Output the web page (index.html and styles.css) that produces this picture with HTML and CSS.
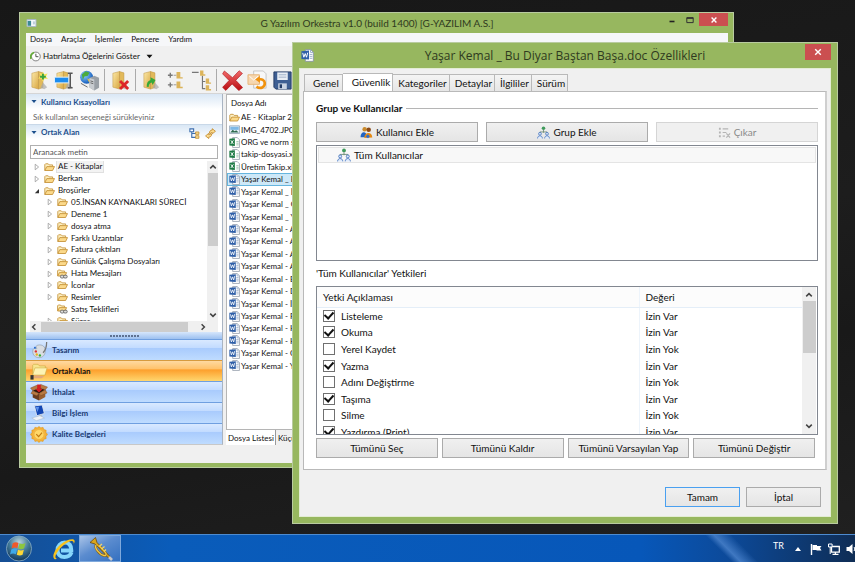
FILE: index.html
```html
<!DOCTYPE html>
<html lang="tr">
<head>
<meta charset="utf-8">
<title>G Yazılım Orkestra</title>
<link rel="stylesheet" href="styles.css">
</head>
<body>
<svg class="defs" aria-hidden="true">
  <defs>
    <linearGradient id="gFolder" x1="0" y1="0" x2="1" y2="1"><stop offset="0" stop-color="#fbe9a9"/><stop offset="1" stop-color="#d9a640"/></linearGradient>
    <linearGradient id="gRed" x1="0" y1="0" x2="0" y2="1"><stop offset="0" stop-color="#f26a6a"/><stop offset="1" stop-color="#b80d12"/></linearGradient>
    <radialGradient id="gOrb" cx=".5" cy=".25" r=".8"><stop offset="0" stop-color="#b9d3df"/><stop offset=".5" stop-color="#3f7897"/><stop offset="1" stop-color="#0b2c50"/></radialGradient>
    <radialGradient id="gGlobe" cx=".35" cy=".35" r=".7"><stop offset="0" stop-color="#8fd0ff"/><stop offset="1" stop-color="#0d55b8"/></radialGradient>
    <radialGradient id="gSeal"><stop offset="0" stop-color="#ffe58a"/><stop offset="1" stop-color="#f0a020"/></radialGradient>
  </defs>
  <symbol id="folder" viewBox="0 0 11 10">
    <path d="M.8 8.400V2.600L1.600 1.800h2.600l1 1.100h3.400v1.400" fill="#fdf0c4" stroke="#c08a2c" stroke-width=".8"/>
    <path d="M.8 8.500 2.800 4.600h7.700L8.600 8.500z" fill="#fbd98a" stroke="#c08a2c" stroke-width=".8" stroke-linejoin="round"/>
  </symbol>
  <symbol id="folder-link" viewBox="0 0 11 10">
    <path d="M.6 6.800V1.800L1.300 1h2.200l.9 1h3.200v1.400" fill="#fdf0c4" stroke="#c08a2c" stroke-width=".8"/>
    <path d="M.6 7 2.400 3.600h7.200L8 7z" fill="#fbd98a" stroke="#c08a2c" stroke-width=".8"/>
    <rect x="3.400" y="6.200" width="3.600" height="2.800" rx="1.300" fill="#ddd" stroke="#666" stroke-width=".9"/>
    <rect x="6.600" y="6.200" width="3.600" height="2.800" rx="1.300" fill="#ddd" stroke="#666" stroke-width=".9"/>
  </symbol>
  <symbol id="word" viewBox="0 0 12 12">
    <path d="M4 .6h5l2.400 2.400v8.400H4z" fill="#fff" stroke="#8a95a5" stroke-width=".8"/>
    <path d="M8.800.8V3.200h2.400M8 5h2.500M8 6.800h2.500M8 8.600h2.500" fill="none" stroke="#8fa6c6" stroke-width=".8"/>
    <path d="M.4 2 7.400 1.400v8.400L.4 9.200z" fill="#2f5fa8"/>
    <path d="M1.600 3.600 2.600 7.600 3.900 4.200 5.100 7.600 6.200 3.400" fill="none" stroke="#fff" stroke-width=".9"/>
  </symbol>
  <symbol id="excel" viewBox="0 0 12 12">
    <path d="M4 .6h5l2.400 2.400v8.400H4z" fill="#fff" stroke="#8a95a5" stroke-width=".8"/>
    <path d="M8 5h2.500M8 6.800h2.500M8 8.600h2.500" stroke="#83b79a" stroke-width=".8"/>
    <path d="M.4 2 6.400 1.400v8.400L.4 9.200z" fill="#1d7a45"/>
    <path d="M2 3.600 4.800 7.600M4.800 3.600 2 7.600" stroke="#fff" stroke-width="1"/>
  </symbol>
  <symbol id="image" viewBox="0 0 12 12">
    <path d="M.6 2h10.800v8.400H.6z" fill="#e9f2fa" stroke="#8a9cae" stroke-width=".8"/>
    <path d="M1.400 3h9.200v3.400H1.400z" fill="#7db8e6"/><path d="M1.400 9.400 4 6.200l2.200 1.600 1.600-1 2.800 2.600z" fill="#2d6a4e"/>
  </symbol>
  <symbol id="closed" viewBox="0 0 6 8"><path d="M1.200 1.200 4.600 4 1.200 6.800z" fill="#fff" stroke="#9a9a9a" stroke-width=".8"/></symbol>
  <symbol id="open" viewBox="0 0 6 8"><path d="M5 2v4.200H.8z" fill="#333"/></symbol>
  <symbol id="caret" viewBox="0 0 8 5"><path d="M.6.6h6.800L4 4.400z" fill="currentColor"/></symbol>
  <symbol id="chev" viewBox="0 0 8 8"><path d="M1.200 5.400 4 2.600l2.800 2.800" fill="none" stroke="#444" stroke-width="1.500"/></symbol>
  <symbol id="group" viewBox="0 0 14 14">
    <circle cx="7" cy="2.400" r="1.900" fill="#3f9a5b"/><path d="M7 4.200v3M3.200 8V6.400h7.600V8" fill="none" stroke="#6b8a75" stroke-width=".9"/>
    <g fill="#dfeafb" stroke="#4a78c0" stroke-width=".9"><circle cx="3.200" cy="8.400" r="1.500"/><path d="M.6 13.400c0-3.800 5.200-3.800 5.200 0"/><circle cx="10.800" cy="8.400" r="1.500"/><path d="M8.200 13.400c0-3.800 5.200-3.800 5.200 0"/></g>
  </symbol>
  <symbol id="book" viewBox="0 0 22 22">
    <path d="M3 3.400 10 1.600V20l-7-2z" fill="url(#gFolder)" stroke="#b98f3c" stroke-width=".5"/>
    <path d="M10 1.600 14.600 3v15.400L10 20z" fill="#e2b95a" stroke="#b98f3c" stroke-width=".5"/>
    <path d="M14.600 13l4.400 5.200-3 2-4-1.600z" fill="#a9a9a9" opacity=".7"/>
  </symbol>
</svg>

<main class="desktop">
  <section class="window app" aria-label="G Yazılım Orkestra">
    <header class="titlebar">
      <svg class="app-icon" viewBox="0 0 10 8"><path d="M.5.5h9v7h-9z" fill="#f4f8fb" stroke="#a9b8c4"/><path d="M1.200 1.800h3.400v5H1.200z" fill="#3b8a94"/><path d="M6.400 2.400h2v3h-2z" fill="#bcd"/></svg>
      <h1 class="title">G Yazılım Orkestra v1.0 (build 1400) [G-YAZILIM A.S.]</h1>
      <div class="caption">
        <button class="cap" aria-label="Küçült"><svg viewBox="0 0 8 8"><path d="M1.500 5.500h5" stroke="#222" stroke-width="1.600"/></svg></button>
        <button class="cap" aria-label="Büyüt"><svg viewBox="0 0 8 8"><path d="M.8 1.600h6.400v5H.8zM.8 2.400h6.400" fill="none" stroke="#333"/></svg></button>
        <button class="cap close" aria-label="Kapat"><svg viewBox="0 0 8 8"><path d="M1.600 1.600 6.400 6.400M6.400 1.600 1.600 6.400" stroke="#fff" stroke-width="1.400"/></svg></button>
      </div>
    </header>
    <div class="app-body">
      <nav class="menu"><a href="#">Dosya</a><a href="#">Araçlar</a><a href="#">İşlemler</a><a href="#">Pencere</a><a href="#">Yardım</a></nav>
      <div class="reminder">
        <button class="flat"><svg class="i11" viewBox="0 0 12 12"><circle cx="6.400" cy="6" r="4.800" fill="#fff" stroke="#777"/><path d="M6.400 3v3.200h2.800" fill="none" stroke="#444"/><path d="M1.200 8.500A5 5 0 0 1 4.400 1.600" fill="none" stroke="#64ad36" stroke-width="1.800"/></svg>Hatırlatma Öğelerini Göster<svg class="drop"><use href="#caret"/></svg></button>
      </div>
      <div class="tools">
        <button class="tool" aria-label="Yeni"><svg viewBox="0 0 22 22"><use href="#book"/><path d="M14.500 1.500l1.500 3 3.500-.8-1.700 3.100 2 2.700-3.600-.3-1.700 3-1.500-3.200-3.500-.2 2.500-2.500-1-3.300 3 1.200z" fill="#f8e45c"/><path d="M14.600 4v6M11.600 7h6" stroke="#3aa33f" stroke-width="2"/></svg></button>
        <button class="tool" aria-label="Yeniden adlandır"><svg viewBox="0 0 22 22"><use href="#book"/><path d="M.5 7.500h15v6H.5z" fill="#1c8cf0" stroke="#e6f2fb"/><path d="M14.500 3.500h5M17 3.500v15M14.500 18.500h5" stroke="#555" stroke-width="1.600"/></svg></button>
        <button class="tool" aria-label="Sunucu"><svg viewBox="0 0 22 22"><circle cx="8" cy="7.600" r="6.800" fill="url(#gGlobe)"/><path d="M3 4.600l4-3.400 4 1.600-2 3.400-3.400.6L4 10.400z" fill="#4cab3c"/><path d="M8.500 9l3.500 1-1 4z" fill="#e6c33c"/><path d="M11 8.400 16 6l5 2v10.600l-5 2.800-5-3z" fill="#9aa0a6"/><path d="M11 8.400l5 1.600v11.400l-5-3z" fill="#c8ccd0"/><path d="M12 11.400l3 1M12 13.400l3 1M2 14l7 4" stroke="#666"/></svg></button>
        <span class="sep"></span>
        <button class="tool" aria-label="Klasör sil"><svg viewBox="0 0 22 22"><use href="#book"/><path d="M10.500 11.500l8.500 8.500M19 11.500 10.500 20" stroke="#dd2528" stroke-width="3"/></svg></button>
        <span class="sep"></span>
        <button class="tool" aria-label="Klasör yükle"><svg viewBox="0 0 22 22"><use href="#book"/><path d="M6 17.500c0-4 1-6 4-7V7.600l5.200 3-3 5-1-2.600c-2 .5-3 2-3.200 4.800z" fill="#35a93a"/></svg></button>
        <button class="tool" aria-label="Genişlet"><svg viewBox="0 0 22 22"><g id="pair"><path d="M2 5.500h5M4.500 3v5" stroke="#777" stroke-width="1.400"/><path d="M8 5.500h3" stroke="#999"/><path d="M11 2h4v5.500h2.500V9H11z" fill="#dcb45a"/></g><use href="#pair" y="10"/></svg></button>
        <button class="tool" aria-label="Ağaç"><svg viewBox="0 0 22 22"><path d="M1 2.500h7M12 6v13.500h3M12 12h3" fill="none" stroke="#777" stroke-width="1.200"/><g id="f1"><path d="M9.500.5h3.500v4H15v1.500H9.500z" fill="#dcb45a"/></g><use href="#f1" x="6" y="8.500"/><use href="#f1" x="6" y="15.500"/></svg></button>
        <span class="sep"></span>
        <button class="tool" aria-label="Sil"><svg viewBox="0 0 22 22"><path d="M2.500 1 11 8 18 .8l3.400 2.800-7 7.200 7.200 7.600-4 3.200L10.600 14.600 4 21.400.6 18.200 7.400 11 .6 4z" fill="url(#gRed)" stroke="#a80d12" stroke-width=".6"/></svg></button>
        <button class="tool" aria-label="Yenile"><svg viewBox="0 0 22 22"><path d="M7 1h10l3 3v15H7z" fill="#f7f7f7" stroke="#c4c4c4"/><path d="M1 5h12v10H1z" fill="#f6d7b0" stroke="#e7b478"/><path d="M2.500 6.500 7 10.500l4.600-4" fill="none" stroke="#fff"/><path d="M10 17.200c4 3.400 9 .8 8.600-3.600-.3-3-3.200-4.600-6-3.600" fill="none" stroke="#f0920f" stroke-width="2.800"/><path d="M13.500 6.400v7L8.600 10z" fill="#f0920f"/></svg></button>
        <button class="tool" aria-label="Kaydet"><svg viewBox="0 0 22 22"><path d="M2 2h18v18H4l-2-2z" fill="#3e5f93" stroke="#223b66"/><path d="M5.500 2.500h11v8h-11z" fill="#e9eef5"/><path d="M6.500 14h9v6h-9z" fill="#c9d3e2"/><path d="M8 15h2.500v4H8z" fill="#223b66"/><path d="M7 5h8M7 7.500h8" stroke="#9fb0c8"/></svg></button>
      </div>
      <div class="work">
        <aside class="side">
          <h2 class="sec"><svg><use href="#caret"/></svg>Kullanıcı Kısayolları</h2>
          <p class="hint">Sık kullanılan seçeneği sürükleyiniz</p>
          <h2 class="sec sec-line"><svg><use href="#caret"/></svg><span>Ortak Alan</span>
            <button class="mini" aria-label="Ağaç görünümü"><svg viewBox="0 0 10 10"><path d="M2.500 3v5.500h4M2.500 5h4" fill="none" stroke="#3f6fae"/><path d="M.8.8h3.400v2.600H.8z" fill="#fff" stroke="#3f6fae"/><path d="M6 3.600h3v2.200H6zM6 7h3v2.400H6z" fill="#f7d98a" stroke="#c08a2c" stroke-width=".7"/></svg></button>
            <button class="mini" aria-label="Yenile"><svg viewBox="0 0 10 10"><path d="M4 4.800C4 2.800 5 1.900 6.600 1.900V.6L9.500 3 6.600 5.300V4C5.800 4 5.500 4.300 5.400 4.800zM6 5.400c0 2-1 2.900-2.600 2.900v1.300L.5 7.200l2.900-2.300v1.300c.8 0 1.100-.3 1.200-.8z" fill="#fbdc90" stroke="#c08420" stroke-width=".7"/></svg></button>
          </h2>
          <div class="find"><input type="text" placeholder="Aranacak metin" aria-label="Aranacak metin"></div>
          <div class="treebox">
            <div class="treeclip">
              <ul class="tree">
                <li><svg class="tw"><use href="#closed"/></svg><svg class="fo"><use href="#folder"/></svg><span class="cur">AE - Kitaplar</span></li>
                <li><svg class="tw"><use href="#closed"/></svg><svg class="fo"><use href="#folder"/></svg><span>Berkan</span></li>
                <li><svg class="tw"><use href="#open"/></svg><svg class="fo"><use href="#folder"/></svg><span>Broşürler</span></li>
                <li class="sub"><svg class="tw"><use href="#closed"/></svg><svg class="fo"><use href="#folder"/></svg><span>05.İNSAN KAYNAKLARI SÜRECİ</span></li>
                <li class="sub"><svg class="tw"><use href="#closed"/></svg><svg class="fo"><use href="#folder"/></svg><span>Deneme 1</span></li>
                <li class="sub"><svg class="tw"><use href="#closed"/></svg><svg class="fo"><use href="#folder"/></svg><span>dosya atma</span></li>
                <li class="sub"><svg class="tw"><use href="#closed"/></svg><svg class="fo"><use href="#folder"/></svg><span>Farklı Uzantılar</span></li>
                <li class="sub"><svg class="tw"><use href="#closed"/></svg><svg class="fo"><use href="#folder"/></svg><span>Fatura çıktıları</span></li>
                <li class="sub"><svg class="tw"><use href="#closed"/></svg><svg class="fo"><use href="#folder"/></svg><span>Günlük Çalışma Dosyaları</span></li>
                <li class="sub"><svg class="tw"><use href="#closed"/></svg><svg class="fo"><use href="#folder-link"/></svg><span>Hata Mesajları</span></li>
                <li class="sub"><svg class="tw"><use href="#closed"/></svg><svg class="fo"><use href="#folder"/></svg><span>İconlar</span></li>
                <li class="sub"><svg class="tw"><use href="#closed"/></svg><svg class="fo"><use href="#folder"/></svg><span>Resimler</span></li>
                <li class="sub"><svg class="tw"></svg><svg class="fo"><use href="#folder-link"/></svg><span>Satış Teklifleri</span></li>
                <li class="sub"><svg class="tw"><use href="#closed"/></svg><svg class="fo"><use href="#folder"/></svg><span>Süreç</span></li>
              </ul>
            </div>
            <div class="vbar"><svg><use href="#chev"/></svg><i class="thumb tree-thumb"></i><svg class="down"><use href="#chev"/></svg></div>
            <div class="hbar"><svg class="left"><use href="#chev"/></svg><i class="thumb hthumb"></i><svg class="right"><use href="#chev"/></svg></div>
          </div>
          <div class="grip"></div>
          <nav class="stack">
            <a href="#"><svg viewBox="0 0 20 20"><path d="M9 4c5-1 8 2 8 6 0 5-3 8-7 8s-7-3-7-7c0-3 2-4 3-3s2 0 1-1.500S8 4.200 9 4z" fill="#d9dde2" stroke="#8e99a6" stroke-width=".7"/><circle cx="6.500" cy="11" r="1.300" fill="#d33"/><circle cx="7.500" cy="14.400" r="1.300" fill="#e9b21c"/><circle cx="11" cy="15.500" r="1.300" fill="#3a3"/><circle cx="5.500" cy="7" r="1.100" fill="#26c"/><path d="M18.500.5c0 4-1 9-4 12" fill="none" stroke="#777" stroke-width="1.400"/></svg>Tasarım</a>
            <a href="#" class="on"><svg viewBox="0 0 20 20"><path d="M3 13V3l1-1h5l1.500 1.800H17V13z" fill="#f7e58e" stroke="#c4a43a" stroke-width=".6"/><path d="M3 14 5.500 6H19l-2.500 8z" fill="#fdf3b4" stroke="#c9aa3f" stroke-width=".6"/><path d="M4 15c3-1.500 6-1 8 0h4l-3 2.500H4z" fill="#e2a87a"/><path d="M.5 14H4v5H.5z" fill="#333"/></svg>Ortak Alan</a>
            <a href="#"><svg viewBox="0 0 20 20"><path d="M3 8l7 3v8l-7-3.500z" fill="#6b3c1e"/><path d="M17 7l-7 4v8l7-4z" fill="#9a5f30"/><path d="M3 8 10 4.500 17 7l-7 4z" fill="#2e1809"/><path d="M3 8 .5 5 8 1.800 10 4.500zM17 7l2.500-3L12 1l-2 3.500zM3 8l-2 3 6.500 2.500L10 11zM17 7l2 3.500-7 3-2-2.500z" fill="#b87a42" stroke="#6b3c1e" stroke-width=".4"/><path d="M8 1h4v5h2l-4 4-4-4h2z" fill="#d51f22"/></svg>İthalat</a>
            <a href="#"><svg viewBox="0 0 20 20"><path d="M5 1.500 13.500.5 16 10 7.500 12.500z" fill="#1246b4" stroke="#dfe6ee" stroke-width="1"/><path d="M6.300 2.800l4-.4-2 6z" fill="#5f93ec"/><path d="M10 12l3-1 1 3-3 1z" fill="#b6c0cc"/><path d="M2 15l9-2.500 5 2.500-9 3z" fill="#eef2f7" stroke="#9fb0c4" stroke-width=".5"/></svg>Bilgi İşlem</a>
            <a href="#"><svg viewBox="0 0 20 20"><path d="M10 1l2 1.600 2.500-.6 1 2.400 2.500.8-.2 2.600L19.600 10l-1.800 2 .2 2.600-2.500.8-1 2.400-2.500-.6L10 19l-2-1.800-2.500.6-1-2.400-2.500-.8.2-2.600L.4 10l1.800-2.200L2 5.200l2.500-.8 1-2.400 2.500.6z" fill="url(#gSeal)" stroke="#dc9a20" stroke-width=".5"/><circle cx="10" cy="10" r="5.500" fill="#ffd768" stroke="#e8a52a" stroke-width=".6"/><path d="M7 9.500l2.600 2.800L13.400 8" fill="none" stroke="#c27a10" stroke-width="1.300"/></svg>Kalite Belgeleri</a>
          </nav>
        </aside>
        <section class="files">
          <div class="filebox">
            <h3 class="filehead">Dosya Adı</h3>
            <ul class="filelist">
              <li><svg><use href="#folder"/></svg>AE - Kitaplar 2</li>
              <li><svg><use href="#image"/></svg>IMG_4702.JPG</li>
              <li><svg><use href="#excel"/></svg>ORG ve norm ş</li>
              <li><svg><use href="#excel"/></svg>takip-dosyasi.xl</li>
              <li><svg><use href="#excel"/></svg>Üretim Takip.xl</li>
              <li class="picked"><svg><use href="#word"/></svg>Yaşar Kemal _ B</li>
              <li><svg><use href="#word"/></svg>Yaşar Kemal _ İ</li>
              <li><svg><use href="#word"/></svg>Yaşar Kemal _ O</li>
              <li><svg><use href="#word"/></svg>Yaşar Kemal _ Y</li>
              <li><svg><use href="#word"/></svg>Yaşar Kemal - A</li>
              <li><svg><use href="#word"/></svg>Yaşar Kemal - A</li>
              <li><svg><use href="#word"/></svg>Yaşar Kemal - A</li>
              <li><svg><use href="#word"/></svg>Yaşar Kemal - A</li>
              <li><svg><use href="#word"/></svg>Yaşar Kemal - B</li>
              <li><svg><use href="#word"/></svg>Yaşar Kemal - D</li>
              <li><svg><use href="#word"/></svg>Yaşar Kemal - İ</li>
              <li><svg><use href="#word"/></svg>Yaşar Kemal - F</li>
              <li><svg><use href="#word"/></svg>Yaşar Kemal - H</li>
              <li><svg><use href="#word"/></svg>Yaşar Kemal - K</li>
              <li><svg><use href="#word"/></svg>Yaşar Kemal - O</li>
              <li><svg><use href="#word"/></svg>Yaşar Kemal - Y</li>
            </ul>
          </div>
          <div class="filetabs"><button class="ftab sel">Dosya Listesi</button><button class="ftab">Küçük</button></div>
        </section>
      </div>
    </div>
  </section>

  <section class="window dialog" role="dialog" aria-label="Özellikler">
    <header class="titlebar">
      <svg class="doc-icon"><use href="#word"/></svg>
      <h1 class="title">Yaşar Kemal _ Bu Diyar Baştan Başa.doc Özellikleri</h1>
      <div class="caption"><button class="cap close" aria-label="Kapat"><svg viewBox="0 0 8 8"><path d="M1.200 1.200 6.800 6.800M6.800 1.200 1.200 6.800" stroke="#fff" stroke-width="1.400"/></svg></button></div>
    </header>
    <div class="dlg-body">
      <div class="tabs" role="tablist">
        <button role="tab">Genel</button><button role="tab" class="sel" aria-selected="true">Güvenlik</button><button role="tab">Kategoriler</button><button role="tab">Detaylar</button><button role="tab">İlgililer</button><button role="tab">Sürüm</button>
      </div>
      <div class="panel">
        <h2 class="grouphead">Grup ve Kullanıcılar</h2>
        <div class="row3">
          <button class="btn"><svg viewBox="0 0 14 14"><circle cx="5" cy="3.400" r="2.400" fill="#c98a2c"/><circle cx="9.400" cy="4" r="2.400" fill="#8a4a18"/><path d="M.6 12c0-7 7-7 7 0z" fill="#1f63c4"/><path d="M4.600 13c0-7 8.600-7 8.600-.6z" fill="#e58a14"/><path d="M6 11.400 8.600 9l2 2.400-2 1.800z" fill="#2b6ed0"/></svg>Kullanıcı Ekle</button>
          <button class="btn"><svg><use href="#group"/></svg>Grup Ekle</button>
          <button class="btn" disabled><svg viewBox="0 0 14 14"><path d="M1 2h2v2H1zM1 6h2v2H1zM1 10h2v2H1z" fill="#b4b4b4"/><path d="M5 3h6M5 7h4M5 11h2.500M9 8l4 4.500M13 8 9 12.500" stroke="#b4b4b4" stroke-width="1.300"/></svg>Çıkar</button>
        </div>
        <ul class="members"><li><svg><use href="#group"/></svg>Tüm Kullanıcılar</li></ul>
        <p class="caption-text">'Tüm Kullanıcılar' Yetkileri</p>
        <div class="perms">
          <div class="permclip">
            <table>
              <thead><tr><th>Yetki Açıklaması</th><th class="val">Değeri</th></tr></thead>
              <tbody>
                <tr><td><label><input type="checkbox" checked>Listeleme</label></td><td>İzin Var</td></tr>
                <tr><td><label><input type="checkbox" checked>Okuma</label></td><td>İzin Var</td></tr>
                <tr><td><label><input type="checkbox">Yerel Kaydet</label></td><td>İzin Yok</td></tr>
                <tr><td><label><input type="checkbox" checked>Yazma</label></td><td>İzin Var</td></tr>
                <tr><td><label><input type="checkbox">Adını Değiştirme</label></td><td>İzin Yok</td></tr>
                <tr><td><label><input type="checkbox" checked>Taşıma</label></td><td>İzin Var</td></tr>
                <tr><td><label><input type="checkbox">Silme</label></td><td>İzin Yok</td></tr>
                <tr><td><label><input type="checkbox" checked>Yazdırma (Print)</label></td><td>İzin Var</td></tr>
              </tbody>
            </table>
          </div>
          <div class="vbar wide"><svg><use href="#chev"/></svg><i class="thumb perm-thumb"></i><svg class="down"><use href="#chev"/></svg></div>
        </div>
        <div class="row4"><button class="btn">Tümünü Seç</button><button class="btn">Tümünü Kaldır</button><button class="btn">Tümünü Varsayılan Yap</button><button class="btn">Tümünü Değiştir</button></div>
      </div>
      <footer class="actions"><button class="btn primary">Tamam</button><button class="btn">İptal</button></footer>
    </div>
  </section>
</main>

<footer class="taskbar">
  <button class="orb" aria-label="Başlat"><svg viewBox="0 0 28 28"><circle cx="14" cy="14" r="13" fill="url(#gOrb)" stroke="#8fb3cc" stroke-width=".8"/><path d="M7.500 8.600c2-1.500 4-1.500 6-.4l-1.200 5.400c-2-1-4-.9-6 .4z" fill="#f0582a"/><path d="M14.500 8.600c2 1 4 1 6.200-.2l-1.400 5.400c-2 1.300-4 1.200-6 .2z" fill="#8cc63f"/><path d="M6 15c2-1.300 4-1.300 6-.3l-1.300 5.300c-2-1-4-1-6 .3z" fill="#3fa9e8"/><path d="M13 15.200c2 1 4 1 6 0l-1.300 5.300c-2 1.200-4 1-6 0z" fill="#fdd835"/></svg></button>
  <button class="ie" aria-label="Internet Explorer"><svg viewBox="0 0 24 24"><path d="M19.500 15.500c-1.300 3-4 4.500-7 4.500-4.400 0-7-3-7-7s3-7.500 7.300-7.500c4.200 0 6.700 3 6.500 8H9" fill="none" stroke="#86d6fb" stroke-width="4"/><path d="M2.500 22c-3-2 0-9.500 6-14.500S21.500 1 22.500 3.500c.4 1.200-.2 2.600-.8 3.600.2-2-.2-3.600-2.700-3C12.600 5.500 3.500 15.500 3.400 20c0 .8.600 1.600 1.600 1.600-.8.600-1.800.8-2.500.4z" fill="#f8c21c"/></svg></button>
  <button class="running" aria-label="Orkestra"><svg viewBox="0 0 24 24"><path d="M1 5.500 6.500.5 8 5.500 21 19.500 19.500 21 6 7z" fill="#d9a51e" stroke="#5c3f08" stroke-width=".7"/><path d="M7 8c-2 3 4 10 8 10.500 3 .4 2.500-2 1-3.500L10.500 9" fill="none" stroke="#8a6410" stroke-width="2.400"/><path d="M7 8c-2 3 4 10 8 10.500 3 .4 2.500-2 1-3.500L10.500 9" fill="none" stroke="#f0c84a" stroke-width="1.300"/><path d="M10 9.500l3-2.500M12.500 12l3-2.500M15 14.500l2-2" stroke="#f3d568" stroke-width="1.200"/><path d="M20 20l3 3" stroke="#c9c9c9" stroke-width="2.600"/></svg></button>
  <div class="tray">
    <span class="lang">TR</span>
    <svg class="up" viewBox="0 0 6 4"><path d="M0 4 3 0l3 4z" fill="#fff"/></svg>
    <svg viewBox="0 0 12 12"><path d="M1.500 1v11" stroke="#fff" stroke-width="1.400"/><path d="M2.500 2H7v1h4.500L10 5l1.500 2.500H6.500V7h-4z" fill="#fff"/></svg>
    <svg viewBox="0 0 12 12"><path d="M3.500 3.500h7.800v5.600H3.500zM7.400 9v2M4.500 11.300h6" fill="none" stroke="#fff" stroke-width="1.300"/><path d="M.5 1h3.600v3H.5zM2.200 4v7" fill="#0d3a78" stroke="#fff"/></svg>
    <svg viewBox="0 0 12 12"><path d="M.5 4h2.500L6.500 1v10L3 8H.5z" fill="#fff"/><path d="M8 4c1 1.200 1 2.800 0 4M9.800 2.500c2 2 2 5 0 7" fill="none" stroke="#fff"/></svg>
  </div>
</footer>
</body>
</html>
```

FILE: styles.css
```css
* { box-sizing: border-box; }

body {
  margin: 0;
  height: 100vh;
  display: flex;
  flex-direction: column;
  overflow: hidden;
  background: #1b1b1b;
  color: #111;
  font: 10px/16px Lato, "Open Sans", sans-serif;
}

h1, h2, h3, p, ul { margin: 0; padding: 0; font-size: inherit; font-weight: inherit; }
ul { list-style: none; }
a { color: inherit; text-decoration: none; }
button, input { margin: 0; padding: 0; border: 0; background: none; color: inherit; font: inherit; }
svg { flex: none; display: block; }
.defs { position: absolute; width: 0; height: 0; }

/* Desktop and windows */
.desktop {
  flex: 1;
  min-height: 0;
  position: relative;
  background: linear-gradient(170deg, #171717, #1d1d1d 50%, #191919 70%, #202020);
}

.window {
  position: absolute;
  display: flex;
  flex-direction: column;
  background: #97b75f;
  border: 1px solid #b9cba0;
}
.app { inset: 12px 121px 66px 19px; padding: 0 5px 4px 6px; font-size: 8px; line-height: 12px; }
.dialog { inset: 42px 17px 10px 292px; padding: 0 6px 6px; }

.titlebar { display: grid; grid-template-columns: 1fr auto 1fr; align-items: center; flex: none; }
.title { white-space: nowrap; color: #2f3a20; }
.app .titlebar { height: 20px; font-size: 10px; }
.app-icon { width: 11px; height: 8px; }
.caption { display: flex; align-self: flex-start; justify-content: flex-end; }
.cap { width: 18px; height: 13px; display: grid; place-items: center; }
.cap svg { width: 8px; height: 8px; }
.cap.close { width: 29px; background: #cb4f50; }
.dialog .titlebar { height: 25px; font-family: "Open Sans", sans-serif; font-size: 12px; }
.doc-icon { width: 13px; height: 13px; margin-left: 2px; }
.dialog .cap.close { width: 26px; height: 16px; margin-top: 1px; }

/* Main window */
.app-body { flex: 1; min-height: 0; display: flex; flex-direction: column; background: #f0f0f0; }
.menu { display: flex; gap: 9px; padding: 0 4px; height: 13px; background: #f6f7f9; }
.reminder { height: 21px; padding: 0 4px; display: flex; align-items: center; border-bottom: 1px solid #b5b5b5; }
.flat { display: flex; align-items: center; gap: 2px; }
.i11 { width: 11px; height: 11px; }
.drop { width: 7px; height: 5px; margin-left: 4px; }
.tools { height: 27px; padding: 0 3px; display: flex; align-items: center; gap: 4px; background: #f2f2f2; border-bottom: 1px solid #d5d5d5; overflow: hidden; }
.tool { width: 21px; height: 21px; flex: none; }
.tool svg { width: 21px; height: 21px; }
.sep { width: 1px; height: 22px; margin-right: 1px; background: #aaa; }

.work { flex: 1; min-height: 0; display: flex; gap: 3px; padding-bottom: 18px; }
.side { width: 197px; flex: none; display: flex; flex-direction: column; background: #fff; border-right: 1px solid #a9b4c2; border-bottom: 1px solid #c8c8c8; }
.sec { height: 15px; display: flex; align-items: center; gap: 4px; padding: 0 5px; font-weight: 700; color: #1c4f8c; background: linear-gradient(#d9e7f5, #fff); }
.sec > svg { width: 6px; height: 5px; }
.sec span { flex: 1; }
.sec-line { border-top: 1px solid #c9d8e8; }
.mini, .mini svg { width: 11px; height: 11px; }
.mini { margin: 2px 1px 0 0; }
.hint { height: 15px; padding: 2px 7px 0; color: #666; }
.find { padding: 6px 4px 2px; }
.find input { display: block; width: 100%; height: 14px; padding: 0 2px; border: 1px solid #b0b0b0; background: #fff; }
.find input::placeholder { color: #555; opacity: 1; }

.treebox { flex: 1; min-height: 0; display: grid; grid-template: minmax(0, 1fr) 11px / minmax(0, 1fr) 11px; padding: 0 4px; }
.treeclip { overflow: hidden; }
.tree { height: 166px; display: grid; grid-template-rows: repeat(14, minmax(0, 1fr)); }
.tree li { display: flex; align-items: center; gap: 2px; padding-left: 4px; white-space: nowrap; }
.tree li.sub { padding-left: 17px; }
.tree span { padding: 0 1px; line-height: 11px; }
.tree .cur { background: #f3f3f3; outline: 1px solid #e0e0e0; }
.tw { width: 6px; height: 8px; margin-right: 2px; }
.fo { width: 11px; height: 10px; }

.vbar { display: flex; flex-direction: column; align-items: center; background: #f0f0f0; padding: 2px 0; }
.vbar svg, .hbar svg { width: 8px; height: 8px; }
.thumb { background: #cdcdcd; }
.down { margin-top: auto; transform: rotate(180deg); }
.left { transform: rotate(-90deg); }
.right { margin-left: auto; transform: rotate(90deg); }
.tree-thumb { width: 10px; height: 47%; margin-top: 2px; }
.hbar { grid-column: 1 / -1; display: flex; align-items: center; padding-right: 11px; background: #f0f0f0; }
.hthumb { width: 83%; height: 10px; margin-left: 3px; }

.grip { height: 7px; flex: none; display: flex; justify-content: center; align-items: center; background: linear-gradient(#d6e6fb, #9cc0f0); }
.grip::before { content: ""; width: 29px; height: 2px; background: repeating-linear-gradient(90deg, #5f7292 0 2px, transparent 2px 3px); }
.stack { flex: none; }
.stack a { height: 21px; display: flex; align-items: center; gap: 4px; padding-left: 4px; font-weight: 700; color: #1a3a72; border-top: 1px solid #6f9fe0; background: linear-gradient(#d9e9ff, #c2dbff 40%, #a9cbfd 42%, #bfdcff); }
.stack svg { width: 18px; height: 19px; }
.stack .on { color: #111; border-color: #d79b3f; background: linear-gradient(#ffd9a0, #ffc26b 40%, #fd9f2c 44%, #ffd66e); }

.files { flex: 1; min-width: 0; display: flex; flex-direction: column; }
.filebox { flex: 1; min-height: 0; overflow: hidden; background: #fff; border: 1px solid #b5b5b5; }
.filehead { height: 16px; padding: 2px 4px 0; }
.filelist { height: 261px; display: grid; grid-template-rows: repeat(21, minmax(0, 1fr)); }
.filelist li { display: flex; align-items: center; gap: 1px; padding-left: 2px; white-space: nowrap; }
.filelist svg { width: 11px; height: 11px; }
.filelist .picked { background: #cde8f8; outline: 1px solid #66b5de; outline-offset: -1px; }
.filetabs { height: 15px; display: flex; }
.ftab { padding: 0 1px 0 2px; border-right: 1px solid #999; }
.ftab.sel { background: #fff; }

/* Properties dialog */
.dlg-body { flex: 1; min-height: 0; display: flex; flex-direction: column; padding: 4px 3px 9px; background: #f0f0f0; border: 1px solid #e3ecd4; }
.tabs { display: flex; align-items: flex-end; height: 18px; flex: none; }
.tabs button { height: 17px; padding: 0 2px 0 5px; border: 1px solid #b9b9b9; border-bottom: 0; border-left-width: 0; background: linear-gradient(#f4f4f4, #e6e6e6); }
.tabs button:first-child { border-left-width: 1px; margin-left: 1px; padding: 0 3px 0 8px; }
.tabs .sel { height: 18px; background: #fff; padding: 0 2px 2px 9px; }
.panel { flex: 1; min-height: 0; display: flex; flex-direction: column; padding: 8px 7px 11px 12px; background: #fff; border: 1px solid #b9b9b9; border-right: 2px solid #cfcfcf; }
.grouphead { display: flex; align-items: center; gap: 4px; font-weight: 700; }
.grouphead::after { content: ""; flex: 1; height: 1px; background: #b5b5b5; }
.row3 { display: grid; grid-template-columns: repeat(3, 1fr); gap: 8px; margin-top: 6px; }
.btn { height: 20px; display: flex; align-items: center; justify-content: center; gap: 3px; white-space: nowrap; border: 1px solid #ababab; background: linear-gradient(#f0f0f0, #e5e5e5); }
.btn svg { width: 13px; height: 13px; }
.btn:disabled { color: #8a8a8a; border-color: #d5d5d5; background: #f0f0f0; }
.members { height: 116px; margin-top: 3px; padding: 1px; border: 1px solid #828790; background: #fff; }
.members li { height: 16px; display: flex; align-items: center; gap: 3px; padding-left: 18px; background: #f8f8f8; border: 1px solid #e4e4e4; }
.members svg { width: 14px; height: 14px; }
.caption-text { margin: 4px 0 5px; }
.perms { flex: 1; min-height: 0; display: flex; border: 1px solid #828790; background: #fff; }
.permclip { flex: 1; overflow: hidden; }
.permclip table { width: 100%; height: 153px; border-collapse: collapse; table-layout: fixed; }
th { height: 20px; padding: 0 6px; text-align: left; font-weight: 400; background: #fcfcfc; border-bottom: 1px solid #e4eef8; }
th.val { width: 163px; }
td { padding: 0 6px; line-height: 14px; }
th + th, td + td { border-left: 1px solid #edf4fb; }
td label { display: flex; align-items: center; gap: 6px; }
td input { appearance: none; width: 12px; height: 12px; border: 1px solid #707070; background: #fff; display: grid; place-items: center; }
td input:checked::before { content: ""; width: 4px; height: 7px; margin-top: -2px; border: solid #111; border-width: 0 2px 2px 0; transform: rotate(42deg); }
.wide { width: 14px; padding: 4px 0; margin-right: 1px; }
.perm-thumb { width: 13px; height: 52px; margin-top: 2px; }
.row4 { display: grid; grid-template-columns: repeat(4, 1fr); gap: 4px; margin: 3px 3px 0 0; }
.actions { display: flex; justify-content: flex-end; gap: 6px; margin: 17px 6px 0 0; }
.actions .btn { width: 75px; }
.primary { border-color: #4aa0f0; }

/* Taskbar */
.taskbar { height: 28px; flex: none; display: flex; align-items: center; padding-left: 5px; border-top: 1px solid #4d8bd0; background: linear-gradient(45deg, transparent 0 83%, #3f78c2 84%, transparent 86%), linear-gradient(90deg, #164f94, #0a5cba 20%, #0757b9 75%, #0c4a9a 85%, #0f2d55 100%); overflow: hidden; }
.orb, .orb svg { width: 28px; height: 27px; }
.ie { margin-left: 19px; }
.ie, .ie svg { width: 24px; height: 24px; }
.running { width: 42px; height: 27px; margin-left: 3px; padding-left: 9px; border: 1px solid #7fa9dc; background: linear-gradient(150deg, #a9c4e8, #5b8ccf 45%, #3470c0); }
.running svg { width: 24px; height: 24px; }
.tray { align-self: stretch; margin-left: auto; display: flex; align-items: center; gap: 6px; margin-right: -3px; color: #fff; }
.tray svg { width: 12px; height: 12px; }
.tray .up { width: 6px; height: 4px; margin: 0 3px 0 5px; }
.lang { font-size: 9px; line-height: 22px; align-self: flex-start; }
```
